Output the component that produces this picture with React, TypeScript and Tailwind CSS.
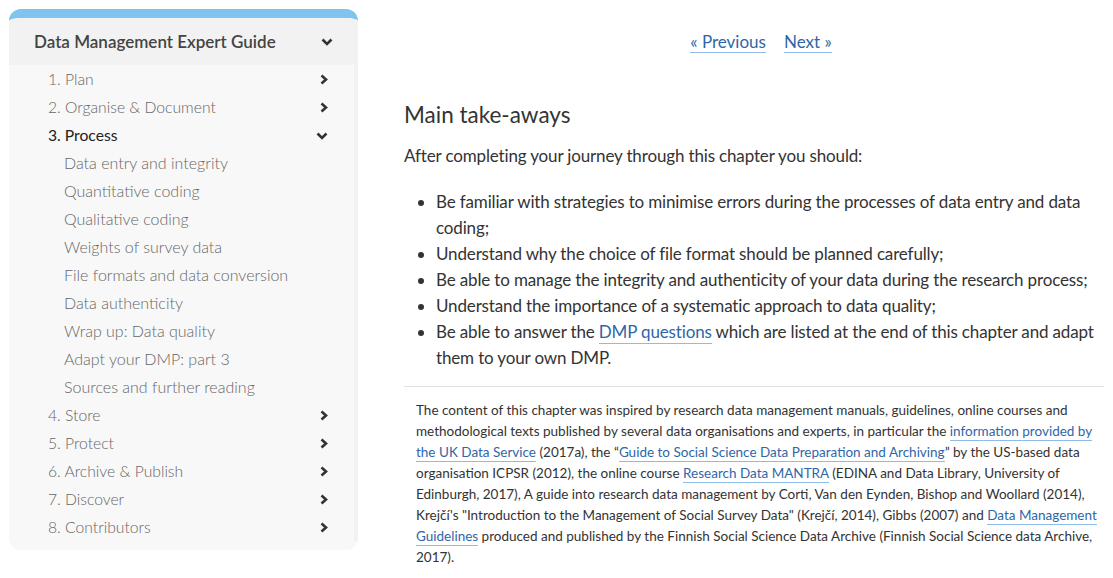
import React from "react";

const Chevron = ({ dir }: { dir: "right" | "down" }) =>
  dir === "right" ? (
    <svg width="8" height="11" viewBox="0 0 8 11" className="block">
      <path d="M1.5 1.5 L6 5.5 L1.5 9.5" fill="none" stroke="#333" strokeWidth="2.6" />
    </svg>
  ) : (
    <svg width="12" height="8" viewBox="0 0 12 8" className="block">
      <path d="M1.5 1.5 L6 6 L10.5 1.5" fill="none" stroke="#333" strokeWidth="2.6" />
    </svg>
  );

const chapters = [
  { label: "1. Plan" },
  { label: "2. Organise & Document" },
  {
    label: "3. Process",
    open: true,
    subs: [
      "Data entry and integrity",
      "Quantitative coding",
      "Qualitative coding",
      "Weights of survey data",
      "File formats and data conversion",
      "Data authenticity",
      "Wrap up: Data quality",
      "Adapt your DMP: part 3",
      "Sources and further reading",
    ],
  },
  { label: "4. Store" },
  { label: "5. Protect" },
  { label: "6. Archive & Publish" },
  { label: "7. Discover" },
  { label: "8. Contributors" },
];

const A = ({ children }: { children: React.ReactNode }) => (
  <a className="text-[#2f66a8] border-b border-[#8fbbe6] pb-[1px]">{children}</a>
);

export default function App() {
  return (
    <div
      className="flex bg-white w-[1113px] h-[578px] overflow-hidden pl-[9px] pt-[9px] text-[#333]"
      style={{ fontFamily: "Lato, 'Noto Sans', sans-serif" }}
    >
      <aside className="w-[349px] shrink-0 self-start rounded-[12px] border-t-[9px] border-[#80c3ee] bg-[#f8f8f8] overflow-hidden">
        <div className="flex items-center justify-between h-[47px] bg-[#f2f2f2] pl-[25px] pr-[25px]">
          <span className="text-[17px] font-semibold text-[#444]">Data Management Expert Guide</span>
          <Chevron dir="down" />
        </div>
        <div className="flex">
          <ul className="flex-1 pb-[9px]">
            {chapters.map((c) => (
              <li key={c.label}>
                <div className="flex items-center justify-between h-[28px] pl-[39px] pr-[26px] pt-[1px]">
                  <span
                    className={
                      c.open
                        ? "text-[15.7px] text-[#222] font-normal"
                        : "text-[15.7px] text-[#666] font-light"
                    }
                  >
                    {c.label}
                  </span>
                  <Chevron dir={c.open ? "down" : "right"} />
                </div>
                {c.subs && (
                  <ul>
                    {c.subs.map((s) => (
                      <li key={s} className="h-[28px] flex items-center pl-[55px] pb-[1px] text-[16px] font-light text-[#666]">
                        {s}
                      </li>
                    ))}
                  </ul>
                )}
              </li>
            ))}
          </ul>
          <div className="w-[4px] bg-[#f2f2f2] self-stretch mb-[9px]" />
        </div>
      </aside>

      <main className="ml-[46px] w-[700px] shrink-0">
        <nav className="flex justify-center gap-[18px] pt-[23px] text-[17px] pl-[14px] leading-[20px]">
          <a className="inline-block text-[#2f66a8] border-b border-[#8fbbe6]">« Previous</a>
          <a className="inline-block text-[#2f66a8] border-b border-[#8fbbe6]">Next »</a>
        </nav>
        <h2 className="mt-[47px] text-[22.5px] font-normal text-[#333] leading-[30px]">Main take-aways</h2>
        <p className="mt-[13px] text-[17px] leading-[26px] tracking-[-0.15px]">
          After completing your journey through this chapter you should:
        </p>
        <ul className="mt-[20px] pl-[32px] list-disc text-[17px] leading-[26px] tracking-[-0.15px] marker:text-[#333]">
          <li>Be familiar with strategies to minimise errors during the processes of data entry and data coding;</li>
          <li>Understand why the choice of file format should be planned carefully;</li>
          <li>Be able to manage the integrity and authenticity of your data during the research process;</li>
          <li>Understand the importance of a systematic approach to data quality;</li>
          <li>
            Be able to answer the <A>DMP questions</A> which are listed at the end of this chapter and adapt them to your own DMP.
          </li>
        </ul>
        <div className="mt-[15px] border-t border-[#e2e2e2]" />
        <p className="mt-[13px] pl-[12px] pr-[2px] text-[13.5px] leading-[21px]">
          The content of this chapter was inspired by research data management manuals, guidelines, online courses and
          methodological texts published by several data organisations and experts, in particular the{" "}
          <A>information provided by the UK Data Service</A> (2017a), the “<A>Guide to Social Science Data Preparation and Archiving</A>” by
          the US-based data organisation ICPSR (2012), the online course <A>Research Data MANTRA</A> (EDINA and Data Library,
          University of Edinburgh, 2017), A guide into research data management by Corti, Van den Eynden, Bishop and Woollard
          (2014), Krejčí's "Introduction to the Management of Social Survey Data" (Krejčí, 2014), Gibbs (2007) and{" "}
          <A>Data Management Guidelines</A> produced and published by the Finnish Social Science Data Archive (Finnish Social
          Science data Archive, 2017).
        </p>
      </main>
    </div>
  );
}
